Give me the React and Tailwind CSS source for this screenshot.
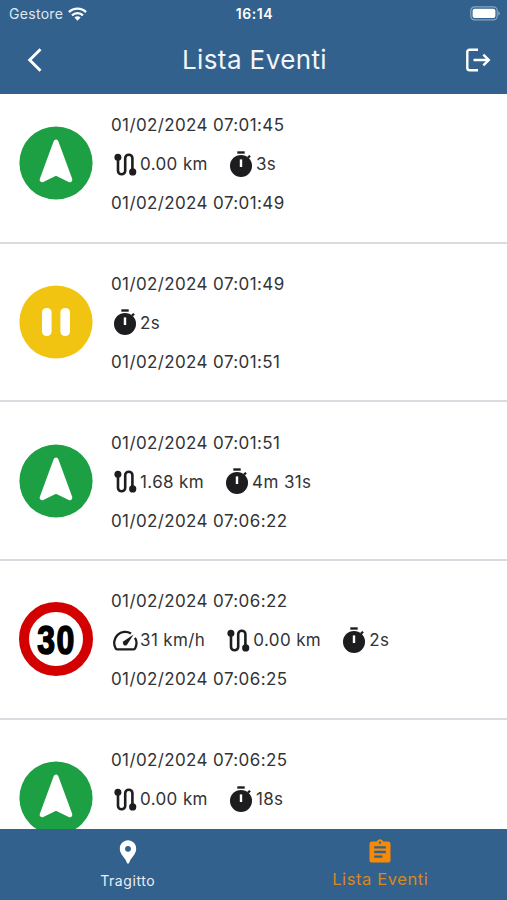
import React from "react";
import { MdAssignment, MdLocationPin } from "react-icons/md";

const events = [
  {
    type: "drive",
    start: "01/02/2024 07:01:45",
    end: "01/02/2024 07:01:49",
    distance: "0.00 km",
    duration: "3s",
  },
  {
    type: "pause",
    start: "01/02/2024 07:01:49",
    end: "01/02/2024 07:01:51",
    duration: "2s",
  },
  {
    type: "drive",
    start: "01/02/2024 07:01:51",
    end: "01/02/2024 07:06:22",
    distance: "1.68 km",
    duration: "4m 31s",
  },
  {
    type: "limit",
    start: "01/02/2024 07:06:22",
    end: "01/02/2024 07:06:25",
    speed: "31 km/h",
    distance: "0.00 km",
    duration: "2s",
  },
  {
    type: "drive",
    start: "01/02/2024 07:06:25",
    distance: "0.00 km",
    duration: "18s",
  },
];

const RouteIcon = () => (
  <svg className="h-7 w-7 shrink-0" viewBox="0 0 28 28" fill="none">
    <path
      d="M7 6.500V19.700a3.600 3.600 0 0 0 7.200 0V7.300a3.600 3.600 0 0 1 7.200 0v13"
      stroke="#1d1d1f"
      strokeWidth="2.600"
    />
    <circle cx="6.900" cy="6.300" r="3.500" fill="#1d1d1f" />
    <circle cx="21.700" cy="20.900" r="3.600" fill="#1d1d1f" />
  </svg>
);

const TimerIcon = () => (
  <svg className="h-7 w-7 shrink-0" viewBox="0 0 28 28">
    <rect x="10.300" y="0.300" width="7.400" height="2.400" fill="#1d1d1f" />
    <path d="m20.300 5.800 2-1.900 1.500 1.500-2 2z" fill="#1d1d1f" />
    <circle cx="14" cy="14.900" r="11" fill="#1d1d1f" />
    <rect x="12.800" y="8.400" width="2.400" height="7.600" fill="#fff" />
  </svg>
);

const SpeedIcon = () => (
  <svg className="h-7 w-7 shrink-0" viewBox="0 0 28 28" fill="none">
    <path
      d="M20 6.500A11 11 0 0 0 4.600 21.200c.3.900.8 1.200 1.500 1.200h16.600c.7 0 1.200-.3 1.500-1.200a11 11 0 0 0-.2-10.500"
      stroke="#1d1d1f"
      strokeWidth="2.300"
    />
    <path
      d="M22.600 7.500 12.600 14.300a2.400 2.400 0 1 0 3.400 3.400z"
      fill="#1d1d1f"
    />
  </svg>
);

const DriveBadge = () => (
  <svg className="h-[74px] w-[74px] shrink-0" viewBox="0 0 74 74">
    <circle cx="37" cy="37" r="36.600" fill="#1d9f43" />
    <path
      d="M37 16 23.200 53.700 37 47 50.800 53.700z"
      fill="#fff"
      stroke="#fff"
      strokeWidth="5"
      strokeLinejoin="round"
    />
  </svg>
);

const PauseBadge = () => (
  <svg className="h-[74px] w-[74px] shrink-0" viewBox="0 0 74 74">
    <circle cx="37" cy="37" r="36.600" fill="#f1c411" />
    <rect x="23" y="23" width="9.600" height="28" rx="4.600" fill="#fff" />
    <rect x="41.400" y="23" width="9.600" height="28" rx="4.600" fill="#fff" />
  </svg>
);

const LimitBadge = () => (
  <div className="flex h-[74px] w-[74px] shrink-0 items-center justify-center rounded-full border-[10px] border-[#d20000] bg-white">
    <span className="scale-x-[0.78] pt-0.5 pl-0.5 font-['Liberation_Sans',sans-serif] text-[41px] leading-none font-bold tracking-[2px] text-black [-webkit-text-stroke:1.6px_#000]">
      30
    </span>
  </div>
);

const badges = {
  drive: DriveBadge,
  pause: PauseBadge,
  limit: LimitBadge,
};

const Metric = ({ icon, children }) => (
  <div className="flex items-center">
    {icon}
    <span className="ml-px">{children}</span>
  </div>
);

const EventRow = ({ event }) => {
  const Badge = badges[event.type];
  return (
    <li className="flex h-[158.8px] shrink-0 items-center border-b-2 border-[#dadbe1] pl-[19px]">
      <Badge />
      <div className="ml-[18px] flex flex-col pt-[3px] text-[17px] leading-[39px] tracking-[0.38px] whitespace-pre text-[#333336]">
        <p>{event.start}</p>
        <div className="flex h-[39px] gap-[19px]">
          {event.speed && <Metric icon={<SpeedIcon />}>{event.speed}</Metric>}
          {event.distance && (
            <Metric icon={<RouteIcon />}>{event.distance}</Metric>
          )}
          <Metric icon={<TimerIcon />}>{event.duration}</Metric>
        </div>
        <p className="h-[39px]">{event.end}</p>
      </div>
    </li>
  );
};

const StatusBar = () => (
  <div className="grid h-[27px] grid-cols-3 items-center pr-[7px] pl-[9px] text-[14px]">
    <div className="flex items-center gap-[5px] tracking-[0.3px] text-[#dfe8f0]">
      Gestore
      <svg className="h-[14px] w-[19px]" viewBox="0 0 19 14" fill="none">
        <path
          d="M1 5.100a12.200 12.200 0 0 1 17 0M4 8.300a8 8 0 0 1 11 0"
          stroke="#fff"
          strokeWidth="2.300"
        />
        <path d="M6.400 10.600a4.500 4.500 0 0 1 6.200 0L9.500 13.700z" fill="#fff" />
      </svg>
    </div>
    <span className="text-center font-semibold tracking-[0.6px]">16:14</span>
    <svg className="h-[15px] w-[31px] justify-self-end" viewBox="0 0 31 15">
      <rect
        x="1.800"
        y="0.900"
        width="26.400"
        height="13"
        rx="3.800"
        fill="none"
        stroke="#8ba6c2"
        strokeWidth="1.200"
      />
      <rect x="3.600" y="2.700" width="22.800" height="9.400" rx="2" fill="#fff" />
      <path d="M29.300 5.200q1.600.8 1.600 2.200t-1.600 2.200z" fill="#8ba6c2" />
    </svg>
  </div>
);

const Header = () => (
  <header className="h-[94px] shrink-0 bg-[#32618d] text-white">
    <StatusBar />
    <div className="flex h-[66px] items-center justify-between pr-4 pl-[27px]">
      <svg className="h-6 w-[17px]" viewBox="0 0 17 24" fill="none">
        <path d="M13.500 1.300 2.700 12l10.800 10.700" stroke="#fff" strokeWidth="2.900" />
      </svg>
      <h1 className="pb-0.5 text-[26px] tracking-[0.4px] text-[#f2f6fa]">
        Lista Eventi
      </h1>
      <svg className="h-6 w-[26px]" viewBox="0 0 26 24" fill="none">
        <path
          d="M13 1.800H4.500a2.200 2.200 0 0 0-2.200 2.200v16a2.200 2.200 0 0 0 2.200 2.200H13M8.500 12h15.300M18.300 6.600l5.500 5.400-5.500 5.400"
          stroke="#fff"
          strokeWidth="2.400"
        />
      </svg>
    </div>
  </header>
);

const BottomNav = () => (
  <nav className="grid h-[71px] shrink-0 grid-cols-2 bg-[#32618d]">
    <div className="flex flex-col items-center pt-[9px] pl-[2px] text-[14px] tracking-[0.6px] text-[#e9eff5]">
      <MdLocationPin className="h-7 w-7 text-white" />
      <span className="mt-[5px] leading-5">Tragitto</span>
    </div>
    <div className="flex flex-col items-center pt-[9px] text-[16.5px] tracking-[0.6px] text-[#d9881f]">
      <MdAssignment className="h-7 w-7 text-[#f58a07]" />
      <span className="mt-[3px] leading-5">Lista Eventi</span>
    </div>
  </nav>
);

const App = () => {
  return (
    <div className="flex h-[900px] w-[507px] flex-col overflow-hidden bg-white font-[Inter,sans-serif]">
      <Header />
      <main className="min-h-0 flex-1 overflow-hidden">
        <ul className="-mt-[9.3px] flex flex-col">
          {events.map((event) => (
            <EventRow key={event.start} event={event} />
          ))}
        </ul>
      </main>
      <BottomNav />
    </div>
  );
};

export default App;
